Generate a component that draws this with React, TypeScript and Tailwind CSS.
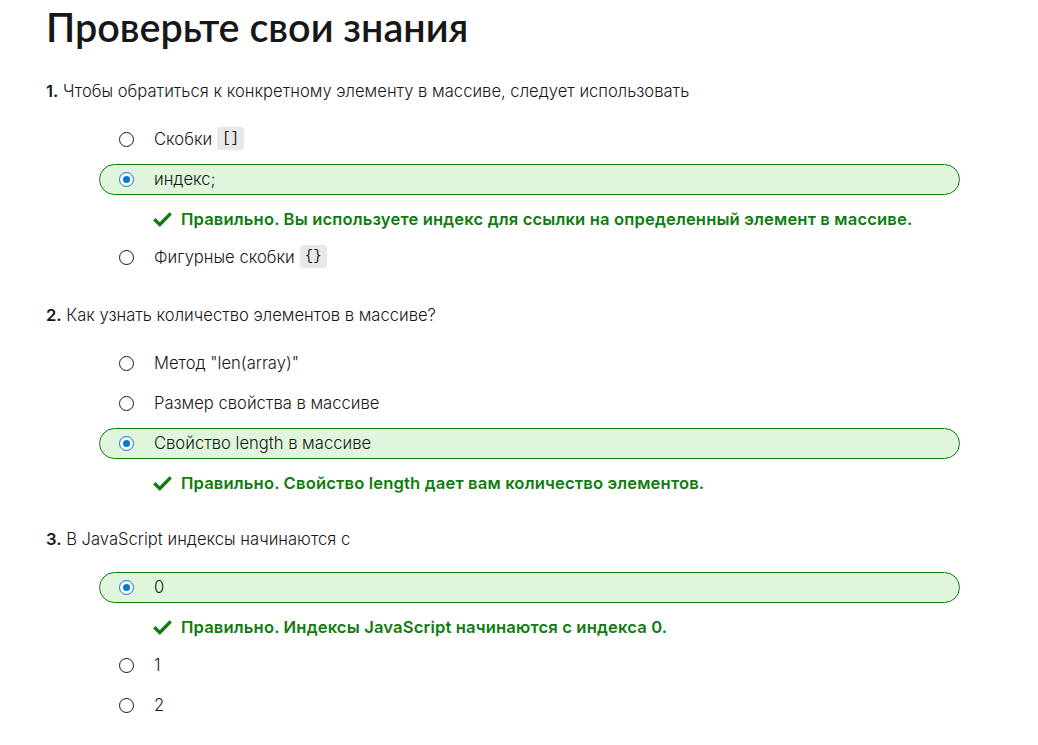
import React from 'react';

type Option = { label: React.ReactNode; selected?: boolean; feedback?: string };
type Question = { num: number; text: string; options: Option[] };

const Code = ({ children }: { children: React.ReactNode }) => (
  <code className="ml-[5px] inline-flex h-[23px] items-center rounded-[3px] bg-[#e8e8e8] px-[5px] text-[14px] text-[#171717] [font-family:'Liberation_Mono',monospace]">
    {children}
  </code>
);

const questions: Question[] = [
  {
    num: 1,
    text: 'Чтобы обратиться к конкретному элементу в массиве, следует использовать',
    options: [
      { label: <>Скобки<Code>[]</Code></> },
      {
        label: 'индекс;',
        selected: true,
        feedback: 'Правильно. Вы используете индекс для ссылки на определенный элемент в массиве.',
      },
      { label: <>Фигурные скобки<Code>{'{}'}</Code></> },
    ],
  },
  {
    num: 2,
    text: 'Как узнать количество элементов в массиве?',
    options: [
      { label: 'Метод "len(array)"' },
      { label: 'Размер свойства в массиве' },
      {
        label: 'Свойство length в массиве',
        selected: true,
        feedback: 'Правильно. Свойство length дает вам количество элементов.',
      },
    ],
  },
  {
    num: 3,
    text: 'В JavaScript индексы начинаются с',
    options: [
      {
        label: '0',
        selected: true,
        feedback: 'Правильно. Индексы JavaScript начинаются с индекса 0.',
      },
      { label: '1' },
      { label: '2' },
    ],
  },
];

function Radio({ selected }: { selected?: boolean }) {
  return selected ? (
    <span className="flex h-[15px] w-[15px] shrink-0 items-center justify-center rounded-full border border-[#0078d4] bg-white">
      <span className="h-[7px] w-[7px] rounded-full bg-[#0078d4]" />
    </span>
  ) : (
    <span className="h-[15px] w-[15px] shrink-0 rounded-full border border-[#171717] bg-white" />
  );
}

function Check() {
  return (
    <svg width="19" height="16" viewBox="0 0 19 16" className="shrink-0">
      <path d="M1.3 8.3 L6.8 13.6 L17.7 2.4" fill="none" stroke="#107c10" strokeWidth="3.4" strokeLinejoin="miter" />
    </svg>
  );
}

export default function App() {
  return (
    <div className="min-h-screen bg-white px-[46px] text-[#171717] [font-family:Inter,sans-serif]">
      <h1 className="pt-[2px] text-[39.5px] leading-[50px] font-semibold [font-family:Lato,sans-serif]">
        Проверьте свои знания
      </h1>

      <div className="mt-[27px] flex flex-col gap-[26px]">
        {questions.map((q) => (
          <div key={q.num}>
            <p className="text-[16.6px] leading-[24px] font-light">
              <span className="font-semibold">{q.num}.</span> {q.text}
            </p>
            <div className="mt-[16px] ml-[53px] flex w-[861px] flex-col">
              {q.options.map((o, i) => (
                <React.Fragment key={i}>
                  <div className="flex h-[40px] items-center">
                    <div
                      className={
                        o.selected
                          ? 'flex h-[31px] w-full items-center rounded-full border border-[#107c10] bg-[#dff6dd] pl-[19px]'
                          : 'flex h-[31px] w-full items-center rounded-full border border-transparent pl-[19px]'
                      }
                    >
                      <Radio selected={o.selected} />
                      <span className="ml-[20px] flex items-center text-[16.6px] font-light">{o.label}</span>
                    </div>
                  </div>
                  {o.feedback && (
                    <div className="flex h-[38px] items-center pt-[2px] pl-[54px] text-[16.6px] font-semibold tracking-[0.15px] text-[#107c10]">
                      <Check />
                      <span className="ml-[9px]">{o.feedback}</span>
                    </div>
                  )}
                </React.Fragment>
              ))}
            </div>
          </div>
        ))}
      </div>
    </div>
  );
}
